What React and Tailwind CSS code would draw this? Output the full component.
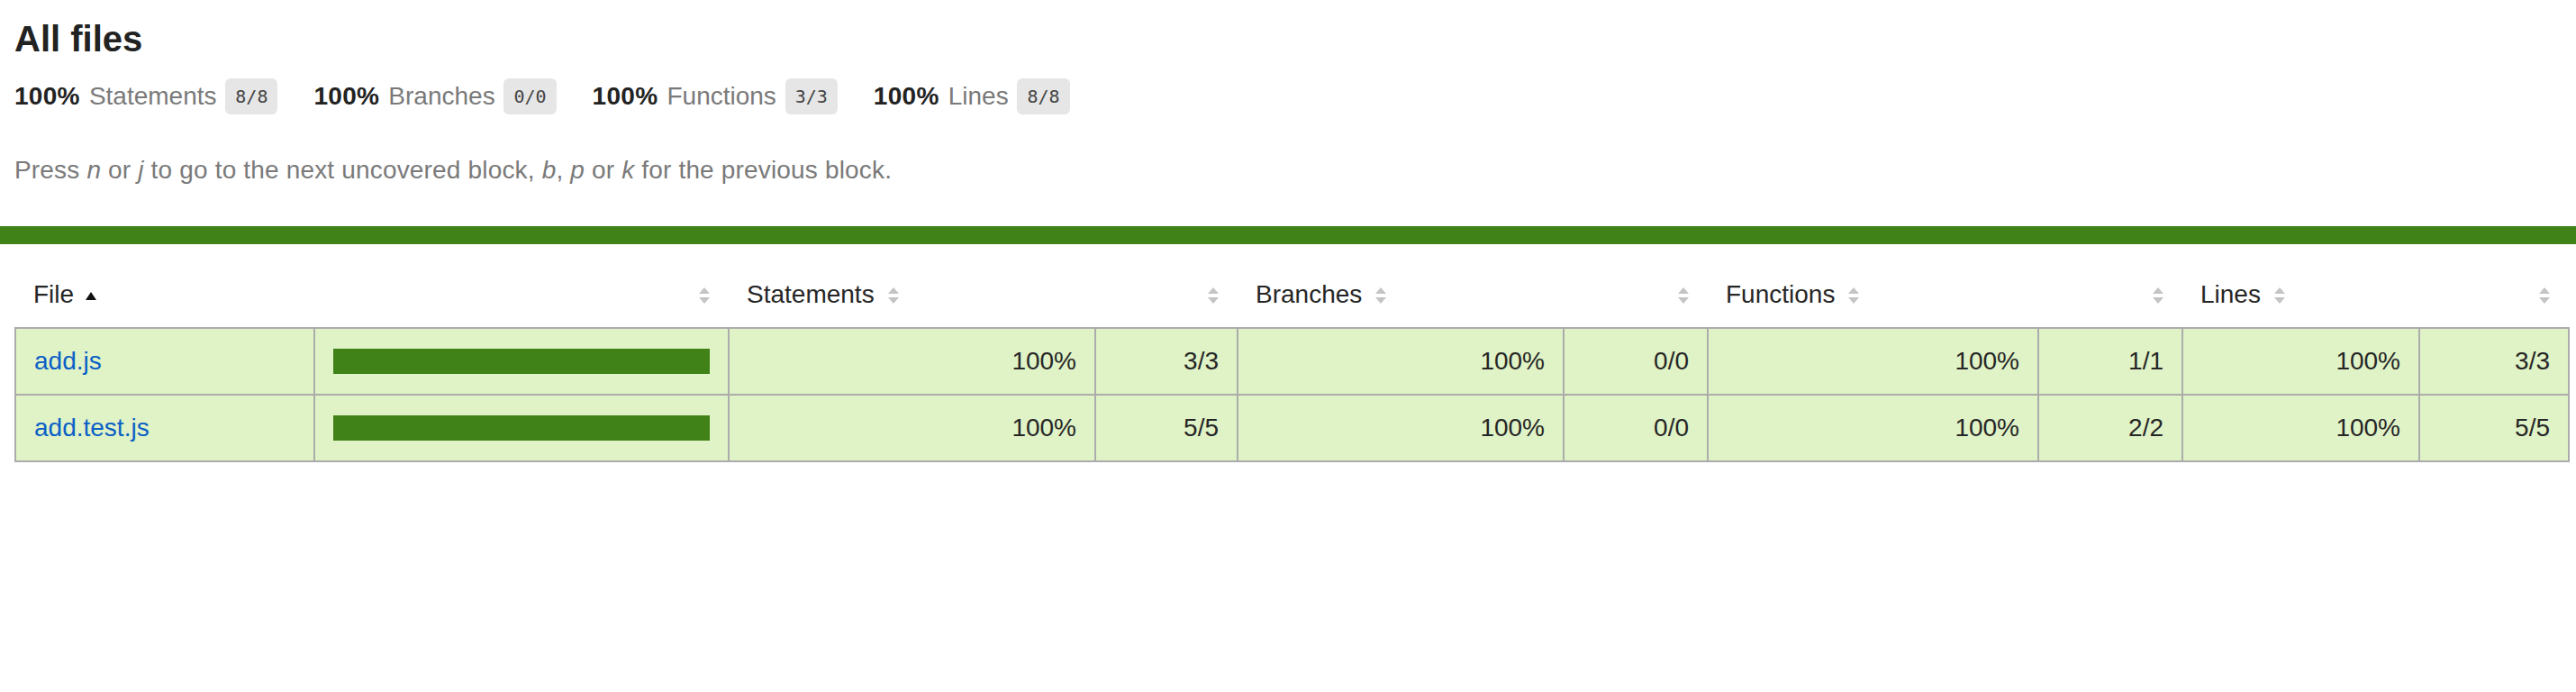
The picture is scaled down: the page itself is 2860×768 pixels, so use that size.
import React from 'react';

const summary = [
  { label: 'Statements', frac: '8/8' },
  { label: 'Branches', frac: '0/0' },
  { label: 'Functions', frac: '3/3' },
  { label: 'Lines', frac: '8/8' },
];

const rows = [
  { file: 'add.js', s: '3/3', b: '0/0', f: '1/1', l: '3/3' },
  { file: 'add.test.js', s: '5/5', b: '0/0', f: '2/2', l: '5/5' },
];

// grey up/down arrows used on every sortable column
const Sorter = () => (
  <svg width="14" height="20" viewBox="0 0 14 20" className="inline-block ml-[14px]">
    <polygon points="7,1 13,8 1,8" fill="#c4c4c4" />
    <polygon points="1,12 13,12 7,19" fill="#c4c4c4" />
  </svg>
);

const SortedAsc = () => (
  <svg width="14" height="20" viewBox="0 0 14 20" className="inline-block ml-[12px]">
    <polygon points="7,6 13,15 1,15" fill="#111" />
  </svg>
);

const App = () => {
  const td = 'p-[20px] leading-[32px] bg-[#e0f3c6] border-r-2 border-[#acacac]';

  return (
    <div className="font-['Liberation_Sans',Arial,sans-serif] text-[28px] text-[#262626] bg-white min-h-[768px]">
      {/* HEADER */}
      <div className="pt-[20px] px-[16px] pb-[20px]">
        <h1 className="text-[40px] font-bold leading-[46px] text-[#222]">All files</h1>
        <div className="flex py-[20px]">
          {summary.map((item) => (
            <div key={item.label} className="pr-[40px] leading-[42px] whitespace-nowrap">
              <span className="font-bold text-[#222] tracking-[0.3px]">100% </span>
              <span className="text-[#7a7a7a] ml-[2px]">{item.label}</span>{' '}
              <span className="inline-block align-middle ml-[2px] font-['DejaVu_Sans_Mono','Liberation_Mono',monospace] text-[20px] leading-[24px] px-[11px] py-[8px] rounded-[6px] bg-[#e6e6e6] text-[#444] relative -top-[2px]">
                {item.frac}
              </span>
            </div>
          ))}
        </div>
        <p className="text-[#7a7a7a] leading-[32px] mt-[24px] mb-[26px] tracking-[0.17px]">
          Press <em>n</em> or <em>j</em> to go to the next uncovered block, <em>b</em>, <em>p</em> or <em>k</em> for the previous block.
        </p>
      </div>

      <div className="h-[20px] bg-[#418218]" />

      {/* TABEL */}
      <div className="pt-[20px] pl-[16px]">
        <table className="table-fixed border-collapse w-[2835px]">
          <colgroup>
            <col className="w-[332px]" />
            <col className="w-[460px]" />
            <col className="w-[407px]" />
            <col className="w-[158px]" />
            <col className="w-[362px]" />
            <col className="w-[160px]" />
            <col className="w-[367px]" />
            <col className="w-[160px]" />
            <col className="w-[263px]" />
            <col className="w-[166px]" />
          </colgroup>
          <thead>
            <tr>
              <th className="p-[20px] leading-[32px] font-normal text-left whitespace-nowrap">File<SortedAsc /></th>
              <th className="p-[20px] leading-[32px] font-normal text-right"><Sorter /></th>
              <th className="p-[20px] leading-[32px] font-normal text-left whitespace-nowrap">Statements<Sorter /></th>
              <th className="p-[20px] leading-[32px] font-normal text-right"><Sorter /></th>
              <th className="p-[20px] leading-[32px] font-normal text-left whitespace-nowrap">Branches<Sorter /></th>
              <th className="p-[20px] leading-[32px] font-normal text-right"><Sorter /></th>
              <th className="p-[20px] leading-[32px] font-normal text-left whitespace-nowrap">Functions<Sorter /></th>
              <th className="p-[20px] leading-[32px] font-normal text-right"><Sorter /></th>
              <th className="p-[20px] leading-[32px] font-normal text-left whitespace-nowrap">Lines<Sorter /></th>
              <th className="p-[20px] leading-[32px] font-normal text-right"><Sorter /></th>
            </tr>
          </thead>
          <tbody className="border-2 border-[#acacac]">
            {rows.map((r) => (
              <tr key={r.file} className="border-b-2 border-[#acacac]">
                <td className={`${td} whitespace-nowrap`}>
                  <a href="#" className="text-[#0a60c6]">{r.file}</a>
                </td>
                <td className={td}>
                  <div className="leading-[0] border-2 border-[#418218]">
                    <div className="inline-block h-[24px] w-full bg-[#418218]" />
                  </div>
                </td>
                <td className={`${td} text-right`}>100%</td>
                <td className={`${td} text-right`}>{r.s}</td>
                <td className={`${td} text-right`}>100%</td>
                <td className={`${td} text-right`}>{r.b}</td>
                <td className={`${td} text-right`}>100%</td>
                <td className={`${td} text-right`}>{r.f}</td>
                <td className={`${td} text-right`}>100%</td>
                <td className={`${td} text-right border-r-0`}>{r.l}</td>
              </tr>
            ))}
          </tbody>
        </table>
      </div>
    </div>
  );
};

export default App;
